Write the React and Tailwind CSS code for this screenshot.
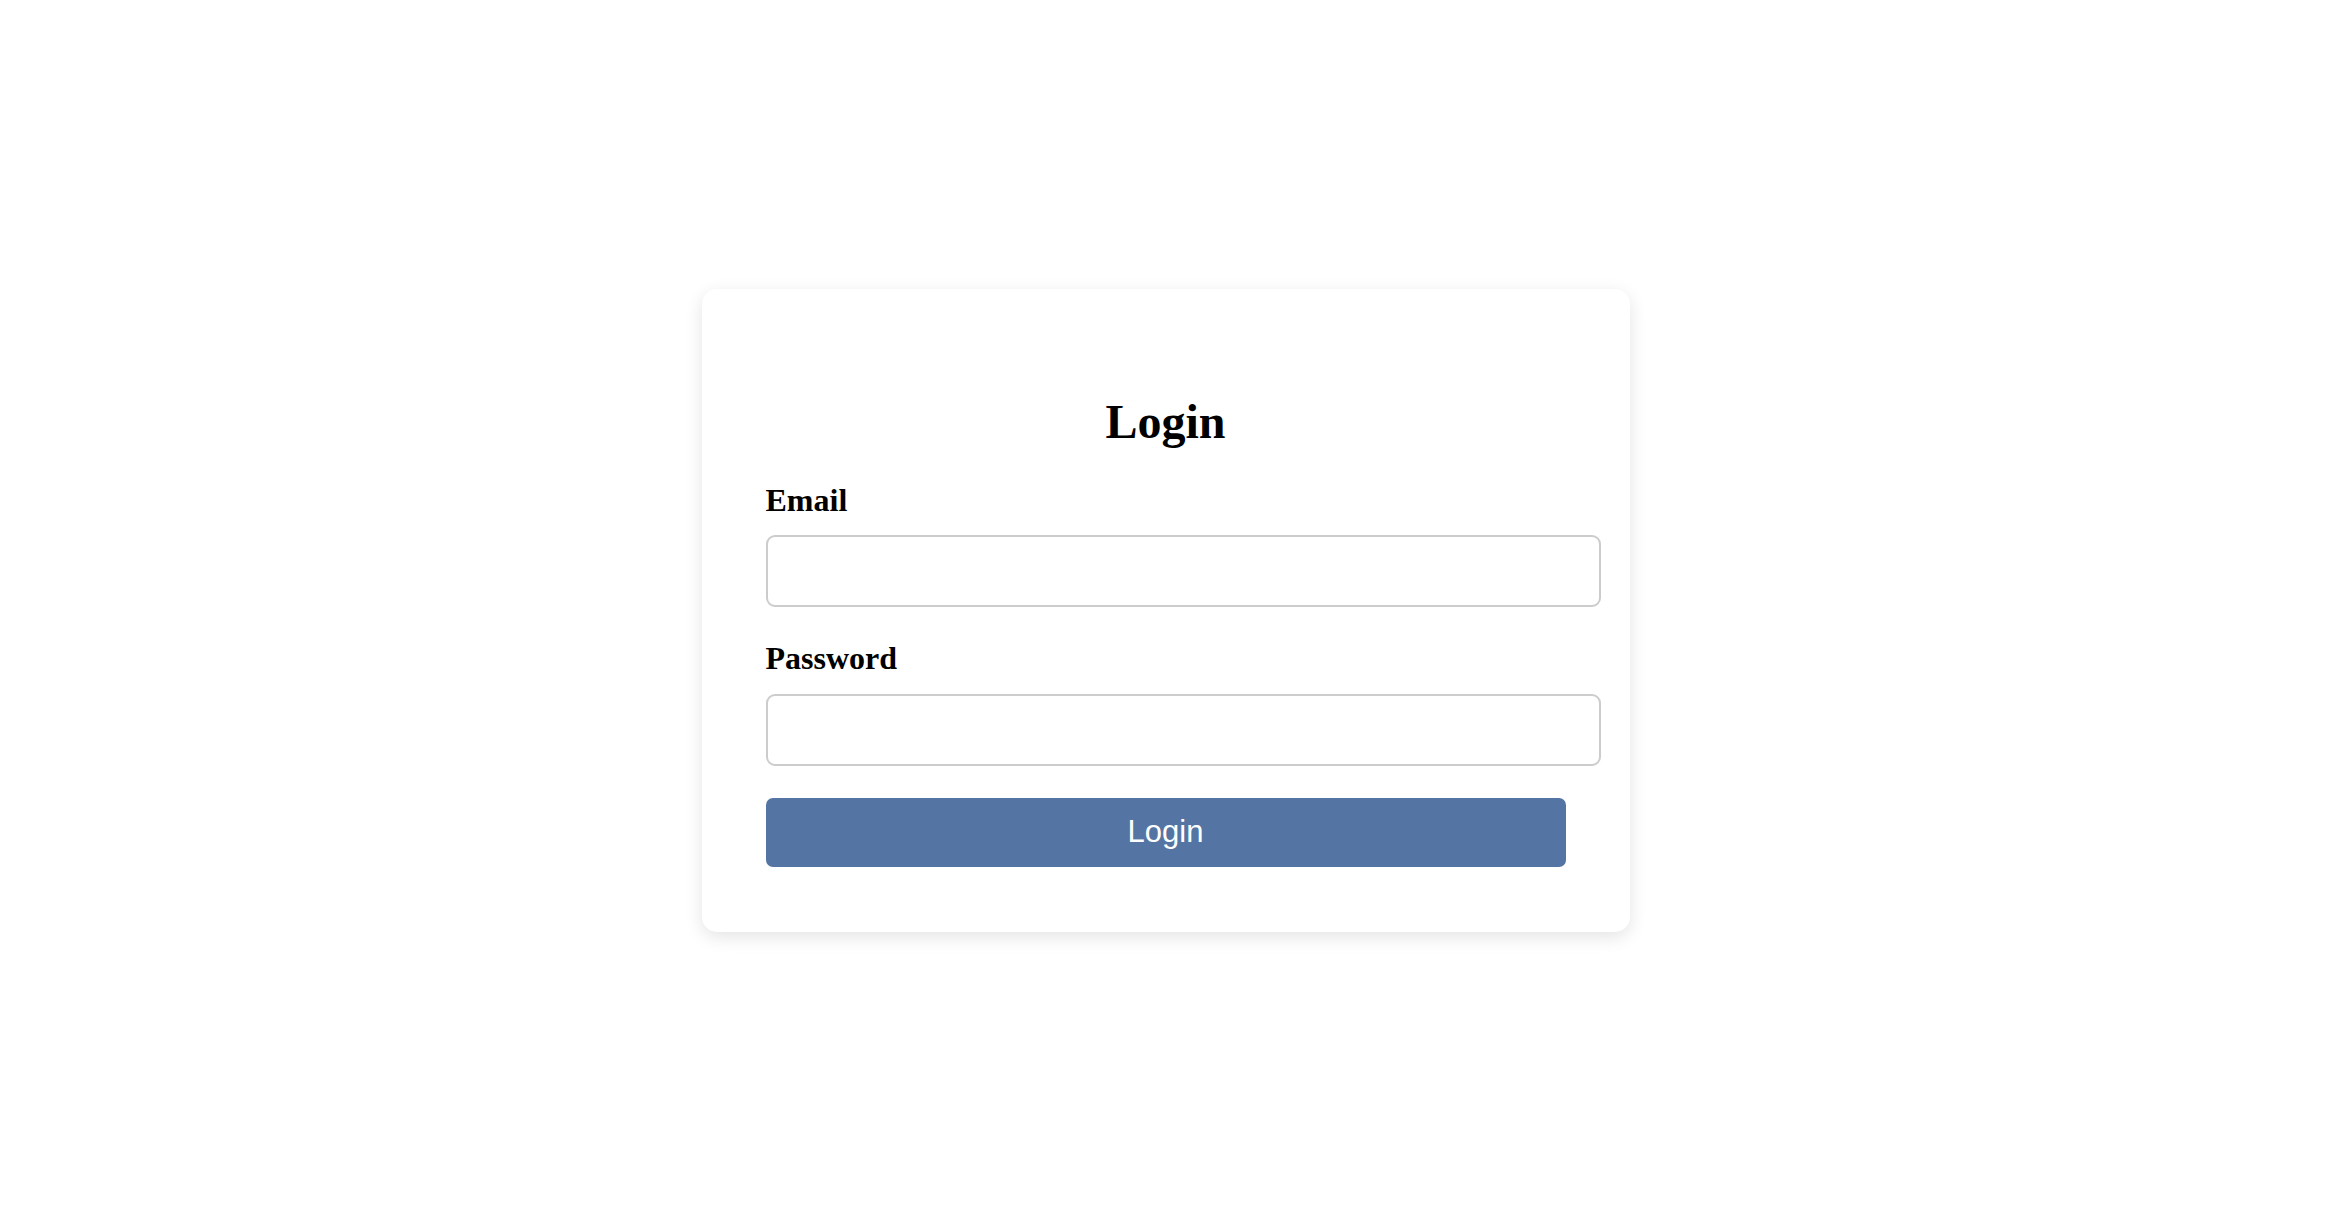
import React, { useState } from 'react';

export default function App() {
  const [formData, setFormData] = useState({ email: '', password: '' });

  const handleChange = (e) => {
    const { name, value } = e.target;
    setFormData((prev) => ({ ...prev, [name]: value }));
  };

  const handleSubmit = (e) => {
    e.preventDefault();
  };

  return (
    <div className="min-h-screen flex items-center justify-center bg-white pr-[9px] pb-[6px] font-['Liberation_Serif',serif]">
      <div className="w-[928px] bg-white rounded-[15px] shadow-[0_5px_18px_rgba(0,0,0,0.11)] px-[64px] pt-[105px] pb-[65px]">
        <h1 className="text-center text-[48px] leading-[56px] font-bold text-black">Login</h1>

        <form onSubmit={handleSubmit}>
          <label htmlFor="email" className="block mt-[32px] text-[32px] leading-[36px] font-bold text-black">
            Email
          </label>
          <input
            id="email"
            name="email"
            type="email"
            value={formData.email}
            onChange={handleChange}
            className="block mt-[17px] w-[835px] h-[72px] px-[16px] border-2 border-[#cccccc] rounded-[9px] bg-white text-[24px] outline-none"
          />

          <label htmlFor="password" className="block mt-[33px] text-[32px] leading-[36px] font-bold text-black">
            Password
          </label>
          <input
            id="password"
            name="password"
            type="password"
            value={formData.password}
            onChange={handleChange}
            className="block mt-[18px] w-[835px] h-[72px] px-[16px] border-2 border-[#cccccc] rounded-[9px] bg-white text-[24px] outline-none"
          />

          <button
            type="submit"
            className="block mt-[32px] w-full h-[69px] rounded-[7px] bg-[#5475a4] text-white text-[31px] font-['Liberation_Sans',Arial,sans-serif] cursor-pointer"
          >
            Login
          </button>
        </form>
      </div>
    </div>
  );
}
